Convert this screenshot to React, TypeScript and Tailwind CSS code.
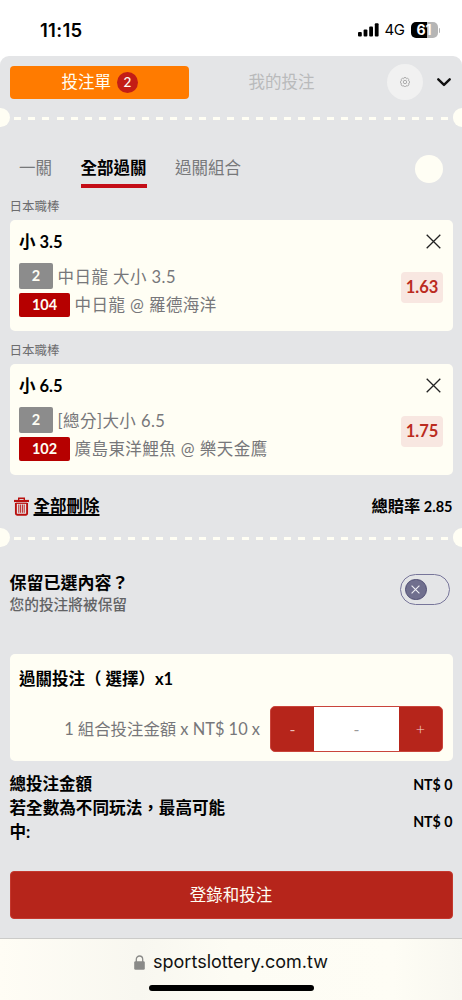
const bets = [
  {
    league: "日本職棒",
    pick: "小 3.5",
    count: "2",
    market: "中日龍 大小 3.5",
    code: "104",
    match: "中日龍 @ 羅德海洋",
    odds: "1.63",
  },
  {
    league: "日本職棒",
    pick: "小 6.5",
    count: "2",
    market: "[總分]大小 6.5",
    code: "102",
    match: "廣島東洋鯉魚 @ 樂天金鷹",
    odds: "1.75",
  },
];

function StatusBar() {
  return (
    <header className="flex h-14 items-start justify-between bg-white pl-10 pr-[22px] pt-[20px] font-['Inter',sans-serif]">
      <span className="text-[18.5px] font-semibold leading-5 tracking-[0.3px] text-black">
        11:15
      </span>
      <div className="flex h-5 items-center">
        <svg width="21" height="14" viewBox="0 0 21 14" className="mr-[6px]">
          <rect x="0" y="9" width="3.8" height="4.6" rx="1" />
          <rect x="5.6" y="6.6" width="3.8" height="7" rx="1" />
          <rect x="11.2" y="3.6" width="3.8" height="10" rx="1" />
          <rect x="16.8" y="0.2" width="3.8" height="13.4" rx="1" />
        </svg>
        <span className="mr-[6px] w-[20px] whitespace-nowrap text-[15px] leading-5 tracking-[-0.4px]">
          4G
        </span>
        <div className="flex h-[16px] w-[27px] items-center justify-center overflow-hidden rounded-[5px] bg-[linear-gradient(to_right,#000_61%,#b5b5b5_61%)] text-[14px] font-bold leading-none text-white">
          61
        </div>
        <div className="ml-px h-[5px] w-[1.5px] rounded-r bg-[#b5b5b5]" />
      </div>
    </header>
  );
}

function TicketDivider() {
  return (
    <div className="-mx-[9.5px] flex h-[19px] items-center justify-between">
      <div className="h-[19px] w-[9.5px] shrink-0 rounded-r-full bg-[#fffef4]" />
      <div className="ml-[4.5px] mr-[4.5px] mt-[2px] flex flex-1 justify-between">
        {Array.from({ length: 31 }, (_, i) => (
          <span key={i} className="h-[3px] w-[7px] bg-[#fffef4]" />
        ))}
      </div>
      <div className="h-[19px] w-[9.5px] shrink-0 rounded-l-full bg-[#fffef4]" />
    </div>
  );
}

function BetCard({ bet }: { bet: (typeof bets)[number] }) {
  return (
    <section className="h-[144px]">
      <p className="h-[25px] pt-[4px] text-[12.5px] leading-[16px] text-[#6c6c6e]">
        {bet.league}
      </p>
      <div className="flex h-[111px] justify-between rounded-[5px] bg-[#fffef4] px-[9.5px]">
        <div className="pt-[12px]">
          <h3 className="text-[16.5px] font-bold leading-[20px] text-black">
            {bet.pick}
          </h3>
          <div className="mt-[10px] flex h-[27px] items-center">
            <span className="mr-[4.5px] flex h-[26px] w-[34px] items-center justify-center rounded-[2px] bg-[#8c8c8c] text-[14.5px] font-bold text-[#fffef4]">
              {bet.count}
            </span>
            <span className="whitespace-nowrap pt-[2px] text-[16.5px] leading-6 tracking-[0.45px] text-[#77777a]">
              {bet.market}
            </span>
          </div>
          <div className="mt-[4px] flex h-[24px] items-center">
            <span className="mr-[4.5px] flex h-[24px] w-[51px] items-center justify-center rounded-[2px] bg-[#b60000] text-[14.5px] font-bold text-[#fffef4]">
              {bet.code}
            </span>
            <span className="whitespace-nowrap text-[16.5px] leading-6 tracking-[0.45px] text-[#77777a]">
              {bet.match}
            </span>
          </div>
        </div>
        <div className="flex flex-col items-end pt-[14px]">
          <button className="mr-[2.5px]">
            <svg
              width="15"
              height="15"
              viewBox="0 0 15 15"
              fill="none"
              stroke="#222"
              strokeWidth="1.3"
              className="block"
            >
              <path d="M0.7 0.7 14.3 14.3M14.3 0.7 0.7 14.3" />
            </svg>
          </button>
          <span className="mt-[23px] flex h-[31px] w-[42px] items-center justify-center rounded-[4px] bg-[#f8e7e1] text-[16.5px] font-bold text-[#bb2b20]">
            {bet.odds}
          </span>
        </div>
      </div>
    </section>
  );
}

function GearIcon() {
  return (
    <svg width="10" height="10" viewBox="0 0 20 20" fill="none" stroke="#a0a0a0" strokeWidth="1.7" strokeLinejoin="round">
      <path d="M8.3 1h3.4l.7 2.1 1 .4 2-1 2.4 2.4-1 2 .4 1 2.1.7v3.4l-2.1.7-.4 1 1 2-2.4 2.4-2-1-1 .4-.7 2.1H8.3l-.7-2.1-1-.4-2 1-2.4-2.4 1-2-.4-1L.7 12V8.600l2.100-.7.4-1-1-2 2.400-2.400 2 1 1-.4z" />
      <circle cx="10" cy="10" r="3.400" />
    </svg>
  );
}

function TrashIcon() {
  return (
    <svg width="15" height="19" viewBox="0 0 15 19" fill="none" stroke="#b9100f">
      <path d="M0 4h15" strokeWidth="2.2" />
      <path d="M4.7 3V1.300h5.600V3" strokeWidth="1.400" />
      <path d="M1.900 6.300h11.200" strokeWidth="1.200" />
      <path d="M1.900 6v10.500a1.200 1.200 0 0 0 1.200 1.200h8.800a1.200 1.200 0 0 0 1.200-1.200V6" strokeWidth="1.900" />
      <path d="M4.800 7.500v8.300M6.600 7.500v8.300M8.400 7.500v8.300M10.200 7.500v8.300" strokeWidth="0.900" />
    </svg>
  );
}

export default function App() {
  return (
    <div className="flex h-[1000px] w-[462px] flex-col overflow-hidden bg-white font-['Lato','Noto_Sans_CJK_TC',sans-serif] text-black">
      <StatusBar />

      <main className="h-[882px] shrink-0 rounded-t-[9px] bg-[#e4e5e7] px-[9.5px] pt-[8px]">
        <div className="flex h-9 items-center">
          <button className="flex h-[33px] w-[179.5px] items-center justify-center rounded-[4px] bg-[#ff7b00] pl-px text-[16.5px] text-[#fffef4]">
            <span className="leading-5">投注單</span>
            <span className="ml-[6px] flex h-[21px] w-[21px] items-center justify-center rounded-full bg-[#c31d15] text-[13.5px] font-medium">
              2
            </span>
          </button>
          <button className="w-[185px] text-center text-[16.5px] text-[#b9babb]">
            我的投注
          </button>
          <button className="ml-[13px] flex h-9 w-9 items-center justify-center rounded-full bg-[#f1f1f1]">
            <GearIcon />
          </button>
          <svg width="14" height="9" viewBox="0 0 14 9" fill="none" stroke="#111" strokeWidth="2.4" strokeLinecap="round" strokeLinejoin="round" className="ml-[14px] mt-px">
            <path d="M1.3 1.3 7 6.9 12.7 1.3" />
          </svg>
        </div>
        <div className="mt-[8px]">
          <TicketDivider />
        </div>

        <nav className="mt-[27px] flex h-[34px] items-start justify-between">
          <div className="flex gap-[28.5px] pl-[9.5px] text-[16.5px] text-[#77787a]">
            <button className="h-[34px] pb-[6px] leading-[28px]">一關</button>
            <button className="h-[34px] border-b-4 border-[#c40d17] pb-[2px] font-bold leading-[28px] text-black">
              全部過關
            </button>
            <button className="h-[34px] pb-[6px] leading-[28px]">過關組合</button>
          </div>
          <div className="mr-[9.5px] mt-px h-7 w-7 rounded-full bg-[#fffef4]" />
        </nav>

        <div className="mt-[7px]">
          {bets.map((bet) => (
            <BetCard key={bet.code} bet={bet} />
          ))}
        </div>

        <div className="mt-[12px] flex h-[22px] items-center justify-between">
          <button className="flex items-center gap-[4.5px] pl-[4.5px]">
            <TrashIcon />
            <span className="text-[16.5px] font-bold leading-[22px] underline decoration-[1.5px] underline-offset-[2px]">
              全部刪除
            </span>
          </button>
          <span className="text-[14.5px] font-bold">
            <span className="text-[16.3px]">總賠率</span> 2.85
          </span>
        </div>
        <div className="mt-[11px]">
          <TicketDivider />
        </div>

        <div className="mt-[25px] flex h-[44px] items-start justify-between">
          <div>
            <h3 className="text-[17px] font-bold leading-[22px]">保留已選內容？</h3>
            <p className="text-[14.7px] font-medium leading-[21px] text-[#626365]">
              您的投注將被保留
            </p>
          </div>
          <div className="mr-[2.5px] mt-[2px] flex h-[31px] w-[50px] items-center rounded-full border border-[#77759a] pl-[4px]">
            <div className="flex h-[21.5px] w-[21.5px] items-center justify-center rounded-full border-[1.5px] border-[#4f4d73] bg-[#706f8e]">
              <svg width="9" height="9" viewBox="0 0 9 9" stroke="#f1f1f6" strokeWidth="1.1">
                <path d="M0.6 0.6 8.4 8.4M8.4 0.6 0.6 8.4" />
              </svg>
            </div>
          </div>
        </div>

        <section className="mt-[37.5px] h-[107.5px] rounded-[5px] bg-[#fffef4] px-[9.5px] pt-[14.5px]">
          <h3 className="text-[16.5px] font-bold leading-[22px]">過關投注（ 選擇）x1</h3>
          <div className="mt-[16px] flex items-center justify-end">
            <span className="mr-[10px] whitespace-nowrap text-[16.4px] text-[#77777a]">
              1 組合投注金額 x NT$ 10 x
            </span>
            <div className="flex h-[46px] w-[173px] overflow-hidden rounded-[5px] border border-[#c9443b] bg-[#b6251b] text-center text-[16px] leading-[44px]">
              <button className="w-[43px] text-[#ecc0b9]">-</button>
              <div className="flex-1 bg-white text-[#999]">-</div>
              <button className="w-[43px] font-light text-[#f5d6d1]">+</button>
            </div>
          </div>
        </section>

        <div className="mt-[11px] flex items-center justify-between font-bold">
          <span className="text-[16.5px] leading-[24px]">總投注金額</span>
          <span className="pt-[2px] text-[14.2px]">NT$ 0</span>
        </div>
        <div className="flex items-center justify-between font-bold">
          <span className="w-[220px] text-[16.6px] leading-[24px]">
            若全數為不同玩法，最高可能中:
          </span>
          <span className="pt-[3px] text-[14.2px]">NT$ 0</span>
        </div>

        <button className="mt-[27px] h-[48px] w-full rounded-[4px] border border-[#c4382e] bg-[#b6251b] text-[16.5px] text-[#fffef4]">
          登錄和投注
        </button>
      </main>

      <footer className="flex flex-1 flex-col items-center border-t border-[#cbcbc9] bg-[linear-gradient(to_right,#fffdf5,#f8f7f0_30%,#fdfcf4_50%,#fefdf5_85%,#f8f7f0)] pt-[11px]">
        <div className="flex h-[24px] items-center">
          <svg width="11" height="15" viewBox="0 0 11 15" className="mr-[8px]">
            <path d="M2.3 7V4.2a3.2 3.2 0 0 1 6.4 0V7" fill="none" stroke="#8a8a88" strokeWidth="1.3" />
            <rect x="0.2" y="6.2" width="10.6" height="8.6" rx="1.4" fill="#8a8a88" />
          </svg>
          <span className="font-['Inter',sans-serif] text-[18px] leading-6 text-[#111]">
            sportslottery.com.tw
          </span>
        </div>
        <div className="mt-[11px] h-[6px] w-[165px] rounded-full bg-black" />
      </footer>
    </div>
  );
}
